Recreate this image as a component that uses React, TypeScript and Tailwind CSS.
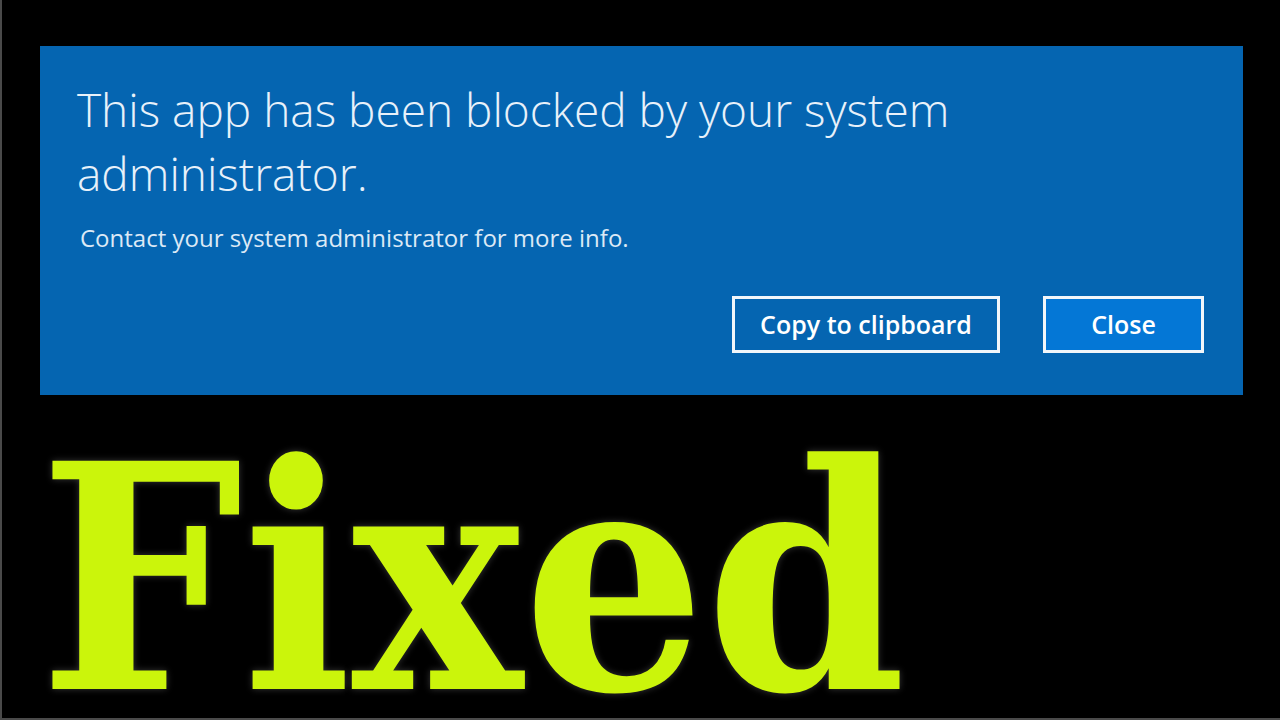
export default function App() {
  return (
    <div className="w-[1280px] h-[720px] bg-black border-l-2 border-b-2 border-[#4a4a4a] overflow-hidden flex flex-col">
      <div className="shrink-0 ml-[38px] mt-[46px] w-[1203px] h-[349px] bg-[#0565b1] flex flex-col pl-[37px] pr-[39px] pt-[31px] pb-[42px]">
        <h1 className="text-[46px] leading-[64px] font-light text-[#e8f1fa] [font-family:'Open_Sans',sans-serif] w-[920px]">
          This app has been blocked by your system administrator.
        </h1>
        <p className="mt-[17px] ml-[3px] text-[24px] leading-[32px] text-[#dce9f6] [font-family:'Open_Sans',sans-serif]">
          Contact your system administrator for more info.
        </p>
        <div className="mt-auto flex justify-end gap-[43px]">
          <button className="w-[268px] h-[57px] border-[3px] border-[#f2f6fa] text-white text-[25px] font-semibold [font-family:'Open_Sans',sans-serif]">
            Copy to clipboard
          </button>
          <button className="w-[161px] h-[57px] border-[3px] border-[#f2f6fa] bg-[#0477d6] text-white text-[25px] font-semibold [font-family:'Open_Sans',sans-serif]">
            Close
          </button>
        </div>
      </div>
      <div className="shrink-0 ml-[37px] mt-[54px] text-[313px] leading-[260px] font-bold text-[#cbf50b] [font-family:'DejaVu_Serif',serif] [text-shadow:0_0_8px_rgba(70,70,70,0.8)] origin-left scale-x-[0.917] whitespace-nowrap">
        Fixed
      </div>
    </div>
  );
}
